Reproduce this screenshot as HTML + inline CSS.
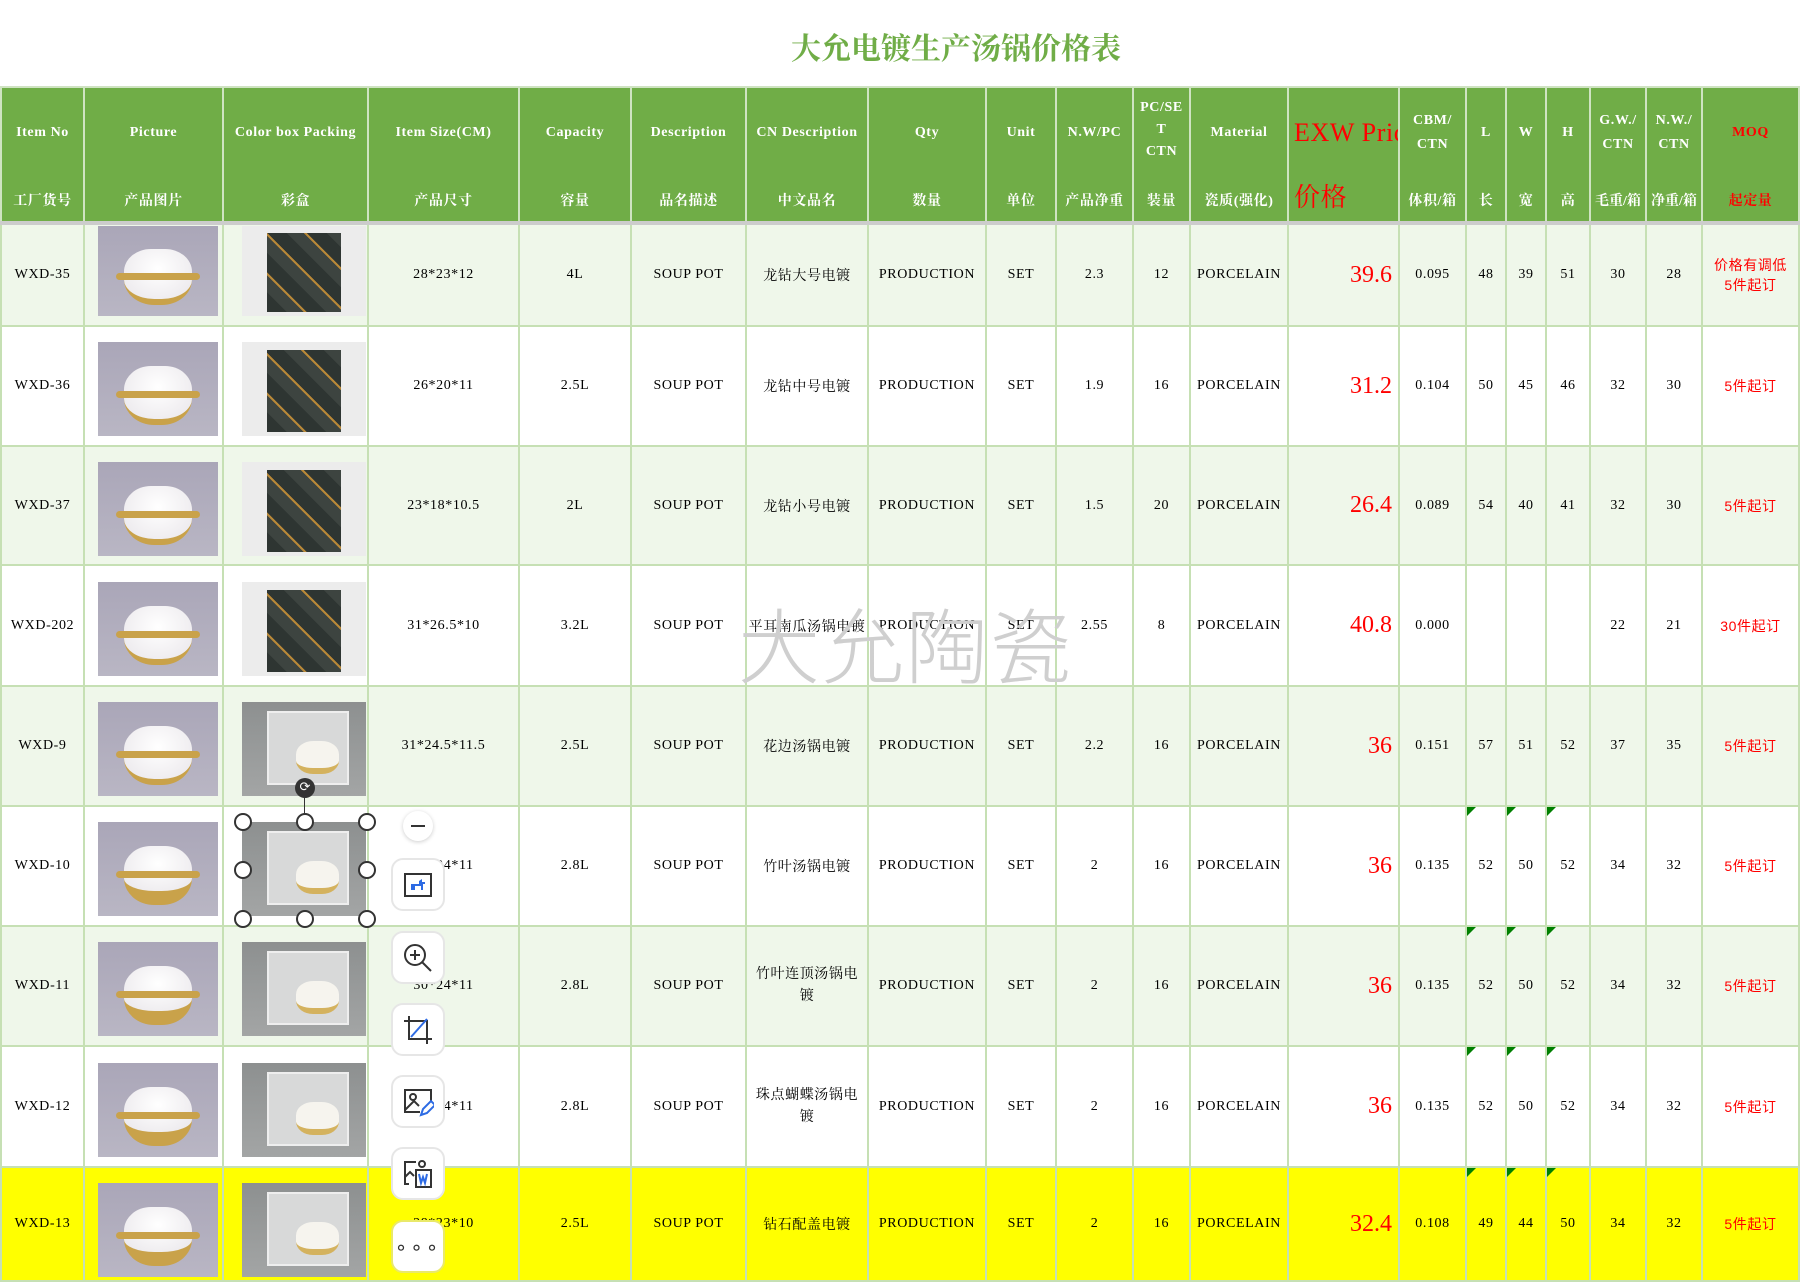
<!DOCTYPE html>
<html><head><meta charset="utf-8"><style>
*{margin:0;padding:0;box-sizing:border-box}
body{width:1800px;height:1282px;background:#fff;position:relative;overflow:hidden;font-family:"Liberation Serif","Noto Serif CJK SC",serif}
.title{position:absolute;top:24px;left:0;width:1912px;text-align:center;font-size:30px;font-weight:bold;color:#70ad47;font-family:"Liberation Serif","Noto Serif CJK SC",serif;letter-spacing:0px}
table{position:absolute;left:0;top:86px;border-collapse:collapse;table-layout:fixed;width:1798px}
td{border:2px solid #c6e0b4;text-align:center;vertical-align:middle;font-size:14px;color:#000;letter-spacing:0.6px;padding:0;overflow:hidden;white-space:nowrap;position:relative}
tr.hd td{background:#70ad47;color:#fff;font-weight:bold;border-color:#cfe3c2;height:136px;font-size:14px;position:relative;white-space:normal;line-height:20px}
tr.hd td .e{position:absolute;left:0;right:0;top:27px;height:36px;display:flex;align-items:center;justify-content:center}
tr.hd td .c{position:absolute;left:0;right:0;top:102px;height:24px;line-height:24px}
tr.g td{border-top:4px solid #ccc}
tr.l td{background:#eff7ea}
tr.w td{background:#fff}
tr.y td{background:#ffff00}
.p{color:#f00;font-size:24px;text-align:right;padding-right:6px;letter-spacing:0}
.m{color:#f00;font-family:"Liberation Sans","Noto Sans CJK SC",sans-serif;font-size:14px;line-height:20px;white-space:normal}
.tri::before{content:"";position:absolute;left:0;top:0;border-top:9px solid #008000;border-right:9px solid transparent}
.img{position:absolute}
.pot{background:linear-gradient(#aaa6b8,#b9b6c4)}
.pot i{position:absolute;left:22%;right:22%;top:25%;bottom:12%;background:radial-gradient(ellipse at 50% 40%,#fff,#e9e6ea);border-radius:40% 40% 45% 45%;border-bottom:6px solid #c9a24a;display:block}
.pot b{position:absolute;left:15%;right:15%;top:52%;height:7px;background:#c9a24a;border-radius:4px;display:block}
.box1{background:#ececec}
.box1 i{position:absolute;left:20%;right:20%;top:8%;bottom:4%;background:repeating-linear-gradient(45deg,#2e3532 0 14px,#3d4440 14px 26px,#b88838 26px 28px);display:block}
.box2{background:linear-gradient(#8d9090,#a3a5a5)}
.box2 i{position:absolute;left:20%;right:14%;top:10%;bottom:12%;background:#d8d9d9;display:block;border:2px solid #eee}
.box2 i::after{content:"";position:absolute;left:35%;right:10%;top:40%;bottom:12%;background:#f6f4ee;border-radius:40%;border-bottom:6px solid #d4b25e}
.hdl{position:absolute;width:18px;height:18px;border-radius:50%;border:2px solid #333;background:#fff}
.btn{position:absolute;left:391px;width:54px;height:53px;background:#fff;border:2px solid #e6e6e6;border-radius:12px;display:flex;align-items:center;justify-content:center}
.wm{position:absolute;left:738px;top:592px;font-size:82px;color:#cfcfcf;font-family:"Noto Sans CJK SC",sans-serif;font-weight:300;letter-spacing:2px;line-height:100px}
</style></head><body>
<div class="title">大允电镀生产汤锅价格表</div>
<table>
<colgroup><col style="width:83px"><col style="width:139px"><col style="width:145px"><col style="width:151px"><col style="width:112px"><col style="width:115px"><col style="width:122px"><col style="width:118px"><col style="width:70px"><col style="width:77px"><col style="width:57px"><col style="width:98px"><col style="width:111px"><col style="width:67px"><col style="width:40px"><col style="width:40px"><col style="width:44px"><col style="width:56px"><col style="width:56px"><col style="width:97px"></colgroup>
<tr class="hd">
<td><div class="e">Item No</div><div class="c">工厂货号</div></td>
<td><div class="e">Picture</div><div class="c">产品图片</div></td>
<td><div class="e">Color box Packing</div><div class="c">彩盒</div></td>
<td><div class="e">Item Size(CM)</div><div class="c">产品尺寸</div></td>
<td><div class="e">Capacity</div><div class="c">容量</div></td>
<td><div class="e">Description</div><div class="c">品名描述</div></td>
<td><div class="e">CN Description</div><div class="c">中文品名</div></td>
<td><div class="e">Qty</div><div class="c">数量</div></td>
<td><div class="e">Unit</div><div class="c">单位</div></td>
<td><div class="e">N.W/PC</div><div class="c">产品净重</div></td>
<td><div class="e" style="top:2px;height:80px;line-height:22px">PC/SE<br>T<br>CTN</div><div class="c">装量</div></td>
<td><div class="e">Material</div><div class="c">瓷质(强化)</div></td>
<td style="text-align:left"><div class="e" style="justify-content:flex-start;padding-left:5px;color:#f00;font-size:26px;font-weight:normal;white-space:nowrap">EXW Price</div><div class="c" style="text-align:left;padding-left:5px;color:#f00;font-size:26px;font-weight:normal;top:98px">价格</div></td>
<td><div class="e" style="line-height:24px">CBM/<br>CTN</div><div class="c">体积/箱</div></td>
<td><div class="e">L</div><div class="c">长</div></td>
<td><div class="e">W</div><div class="c">宽</div></td>
<td><div class="e">H</div><div class="c">高</div></td>
<td><div class="e" style="line-height:24px">G.W./<br>CTN</div><div class="c" style="letter-spacing:0">毛重/箱</div></td>
<td><div class="e" style="line-height:24px">N.W./<br>CTN</div><div class="c" style="letter-spacing:0">净重/箱</div></td>
<td><div class="e" style="color:#f00">MOQ</div><div class="c" style="color:#f00">起定量</div></td>
</tr>
<tr class="l g" style="height:103px"><td>WXD-35</td><td></td><td></td><td>28*23*12</td><td>4L</td><td>SOUP POT</td><td>龙钻大号电镀</td><td>PRODUCTION</td><td>SET</td><td>2.3</td><td>12</td><td>PORCELAIN</td><td class="p">39.6</td><td>0.095</td><td>48</td><td>39</td><td>51</td><td>30</td><td>28</td><td class="m">价格有调低<br>5件起订</td></tr>
<tr class="w" style="height:120px"><td>WXD-36</td><td></td><td></td><td>26*20*11</td><td>2.5L</td><td>SOUP POT</td><td>龙钻中号电镀</td><td>PRODUCTION</td><td>SET</td><td>1.9</td><td>16</td><td>PORCELAIN</td><td class="p">31.2</td><td>0.104</td><td>50</td><td>45</td><td>46</td><td>32</td><td>30</td><td class="m">5件起订</td></tr>
<tr class="l" style="height:119px"><td>WXD-37</td><td></td><td></td><td>23*18*10.5</td><td>2L</td><td>SOUP POT</td><td>龙钻小号电镀</td><td>PRODUCTION</td><td>SET</td><td>1.5</td><td>20</td><td>PORCELAIN</td><td class="p">26.4</td><td>0.089</td><td>54</td><td>40</td><td>41</td><td>32</td><td>30</td><td class="m">5件起订</td></tr>
<tr class="w" style="height:121px"><td>WXD-202</td><td></td><td></td><td>31*26.5*10</td><td>3.2L</td><td>SOUP POT</td><td>平耳南瓜汤锅电镀</td><td>PRODUCTION</td><td>SET</td><td>2.55</td><td>8</td><td>PORCELAIN</td><td class="p">40.8</td><td>0.000</td><td></td><td></td><td></td><td>22</td><td>21</td><td class="m">30件起订</td></tr>
<tr class="l" style="height:120px"><td>WXD-9</td><td></td><td></td><td>31*24.5*11.5</td><td>2.5L</td><td>SOUP POT</td><td>花边汤锅电镀</td><td>PRODUCTION</td><td>SET</td><td>2.2</td><td>16</td><td>PORCELAIN</td><td class="p">36</td><td>0.151</td><td>57</td><td>51</td><td>52</td><td>37</td><td>35</td><td class="m">5件起订</td></tr>
<tr class="w" style="height:120px"><td>WXD-10</td><td></td><td></td><td>30*24*11</td><td>2.8L</td><td>SOUP POT</td><td>竹叶汤锅电镀</td><td>PRODUCTION</td><td>SET</td><td>2</td><td>16</td><td>PORCELAIN</td><td class="p">36</td><td>0.135</td><td class="tri">52</td><td class="tri">50</td><td class="tri">52</td><td>34</td><td>32</td><td class="m">5件起订</td></tr>
<tr class="l" style="height:120px"><td>WXD-11</td><td></td><td></td><td>30*24*11</td><td>2.8L</td><td>SOUP POT</td><td style="white-space:normal;line-height:22px">竹叶连顶汤锅电<br>镀</td><td>PRODUCTION</td><td>SET</td><td>2</td><td>16</td><td>PORCELAIN</td><td class="p">36</td><td>0.135</td><td class="tri">52</td><td class="tri">50</td><td class="tri">52</td><td>34</td><td>32</td><td class="m">5件起订</td></tr>
<tr class="w" style="height:121px"><td>WXD-12</td><td></td><td></td><td>30*24*11</td><td>2.8L</td><td>SOUP POT</td><td style="white-space:normal;line-height:22px">珠点蝴蝶汤锅电<br>镀</td><td>PRODUCTION</td><td>SET</td><td>2</td><td>16</td><td>PORCELAIN</td><td class="p">36</td><td>0.135</td><td class="tri">52</td><td class="tri">50</td><td class="tri">52</td><td>34</td><td>32</td><td class="m">5件起订</td></tr>
<tr class="y" style="height:114px"><td>WXD-13</td><td></td><td></td><td>28*23*10</td><td>2.5L</td><td>SOUP POT</td><td>钻石配盖电镀</td><td>PRODUCTION</td><td>SET</td><td>2</td><td>16</td><td>PORCELAIN</td><td class="p">32.4</td><td>0.108</td><td class="tri">49</td><td class="tri">44</td><td class="tri">50</td><td>34</td><td>32</td><td class="m">5件起订</td></tr>
</table>

<div class="img pot" style="left:98px;top:226px;width:120px;height:90px"><i></i><b></b></div>
<div class="img pot" style="left:98px;top:342px;width:120px;height:94px"><i></i><b></b></div>
<div class="img pot" style="left:98px;top:462px;width:120px;height:94px"><i></i><b></b></div>
<div class="img pot" style="left:98px;top:582px;width:120px;height:94px"><i></i><b></b></div>
<div class="img pot" style="left:98px;top:702px;width:120px;height:94px"><i></i><b></b></div>
<div class="img pot" style="left:98px;top:822px;width:120px;height:94px"><i style="border-bottom-width:14px"></i><b></b></div>
<div class="img pot" style="left:98px;top:942px;width:120px;height:94px"><i style="border-bottom-width:14px"></i><b></b></div>
<div class="img pot" style="left:98px;top:1063px;width:120px;height:94px"><i style="border-bottom-width:14px"></i><b></b></div>
<div class="img pot" style="left:98px;top:1183px;width:120px;height:94px"><i style="border-bottom-width:14px"></i><b></b></div>
<div class="img box1" style="left:242px;top:226px;width:124px;height:90px"><i></i></div>
<div class="img box1" style="left:242px;top:342px;width:124px;height:94px"><i></i></div>
<div class="img box1" style="left:242px;top:462px;width:124px;height:94px"><i></i></div>
<div class="img box1" style="left:242px;top:582px;width:124px;height:94px"><i></i></div>
<div class="img box2" style="left:242px;top:702px;width:124px;height:94px"><i></i></div>
<div class="img box2" style="left:242px;top:822px;width:124px;height:94px"><i></i></div>
<div class="img box2" style="left:242px;top:942px;width:124px;height:94px"><i></i></div>
<div class="img box2" style="left:242px;top:1063px;width:124px;height:94px"><i></i></div>
<div class="img box2" style="left:242px;top:1183px;width:124px;height:94px"><i></i></div>

<div style="position:absolute;left:304px;top:795px;width:1px;height:27px;background:#333"></div>
<div style="position:absolute;left:295px;top:778px;width:20px;height:20px;border-radius:50%;background:#333;color:#fff;font-size:13px;line-height:20px;text-align:center;font-family:'DejaVu Sans'">⟳</div>
<div class="hdl" style="left:234px;top:813px"></div><div class="hdl" style="left:296px;top:813px"></div><div class="hdl" style="left:358px;top:813px"></div>
<div class="hdl" style="left:234px;top:861px"></div><div class="hdl" style="left:358px;top:861px"></div>
<div class="hdl" style="left:234px;top:910px"></div><div class="hdl" style="left:296px;top:910px"></div><div class="hdl" style="left:358px;top:910px"></div>

<div class="wm">大允陶瓷</div>

<div style="position:absolute;left:403px;top:811px;width:30px;height:30px;border-radius:50%;background:#fff;box-shadow:0 1px 4px rgba(0,0,0,.2)"><div style="position:absolute;left:8px;top:14px;width:14px;height:2px;background:#333"></div></div>
<div class="btn" style="top:858px"><svg width="30" height="26" viewBox="0 0 30 26"><rect x="2" y="2" width="26" height="22" fill="none" stroke="#333" stroke-width="2"/><path d="M8 18v-6h8v-3l3-2v3h3v2h-2v6h-2v-4h-6v4z" fill="#2d6be4"/></svg></div>
<div class="btn" style="top:931px"><svg width="32" height="32" viewBox="0 0 32 32"><circle cx="13" cy="13" r="10" fill="none" stroke="#333" stroke-width="2"/><path d="M13 8v10M8 13h10M20 20l9 9" stroke="#333" stroke-width="2"/></svg></div>
<div class="btn" style="top:1003px"><svg width="32" height="32" viewBox="0 0 32 32"><path d="M7 2v23h23M2 7h23v23" fill="none" stroke="#333" stroke-width="2"/><path d="M9 23L25 5" stroke="#2d6be4" stroke-width="2"/></svg></div>
<div class="btn" style="top:1075px"><svg width="32" height="32" viewBox="0 0 32 32"><path d="M18 26H3V4h26v12" fill="none" stroke="#333" stroke-width="2"/><circle cx="11" cy="11" r="3" fill="none" stroke="#333" stroke-width="2"/><path d="M3 24l9-9 5 5" fill="none" stroke="#333" stroke-width="2"/><path d="M19 29l2-6 8-8 4 4-8 8z" fill="none" stroke="#2d6be4" stroke-width="2"/></svg></div>
<div class="btn" style="top:1147px"><svg width="32" height="32" viewBox="0 0 32 32"><path d="M14 4H3v22h4" fill="none" stroke="#333" stroke-width="2"/><path d="M3 19l5-5 4 4" fill="none" stroke="#333" stroke-width="2"/><circle cx="20" cy="6" r="3" fill="none" stroke="#333" stroke-width="2"/><rect x="14" y="12" width="15" height="17" fill="none" stroke="#333" stroke-width="2"/><path d="M17 16l2 9 2-6 2 6 2-9" fill="none" stroke="#2d6be4" stroke-width="2"/></svg></div>
<div class="btn" style="top:1220px;border-color:#e9e96a"><span style="font-size:20px;letter-spacing:3px;color:#333;font-family:'DejaVu Sans'">∘∘∘</span></div>
</body></html>
